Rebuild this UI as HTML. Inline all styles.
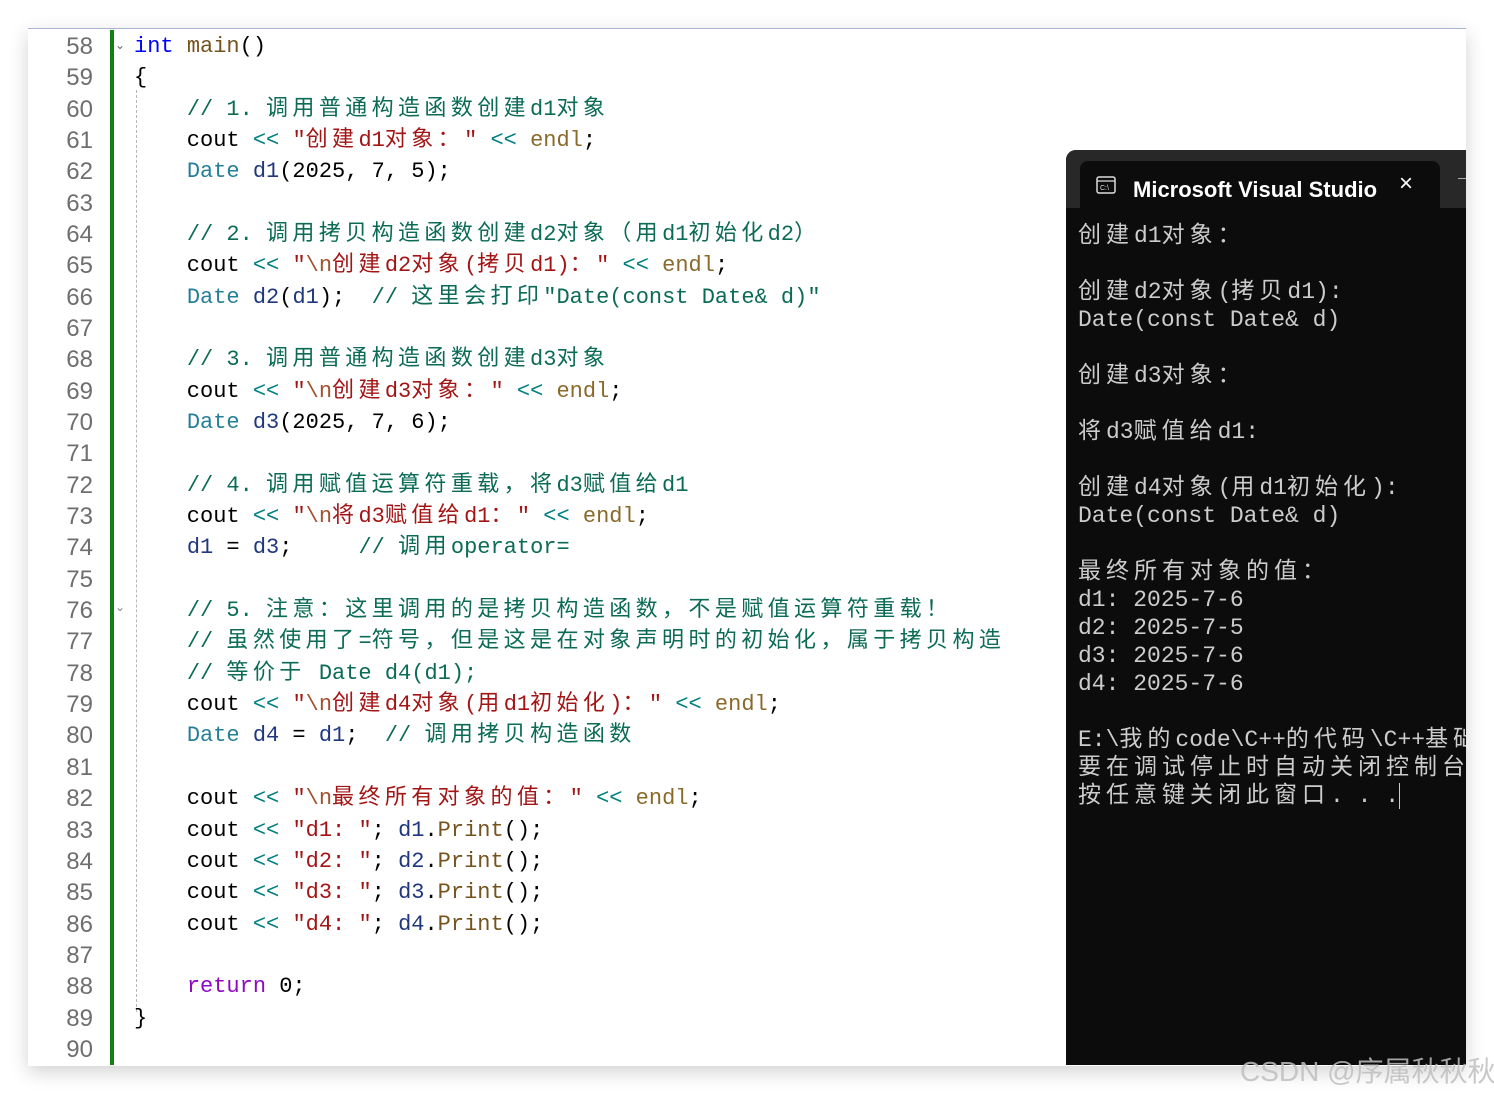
<!DOCTYPE html>
<html><head><meta charset="utf-8">
<style>
body{margin:0;width:1494px;height:1093px;background:#fff;position:relative;overflow:hidden;font-family:"Liberation Mono","Noto Sans CJK SC",monospace;}
#ed{position:absolute;left:28px;top:28px;width:1438px;height:1037px;background:#fff;border-top:1px solid #a9b7d6;box-shadow:0 6px 18px rgba(0,0,0,.18);}
.ln{position:absolute;left:40px;width:53px;text-align:right;color:#6e6e6e;font-family:"Liberation Sans",sans-serif;font-size:24px;line-height:30px;}
.cl{position:absolute;left:134px;white-space:pre;font-size:22px;line-height:30px;color:#000;}
.cl .c{letter-spacing:4.4px}
#bar{position:absolute;left:110px;top:30px;width:4px;height:1035px;background:#108010;}
.g{position:absolute;left:134px;width:0;border-left:1px dashed #b8b8b8;}
.k{color:#0000ff}.f{color:#74531f}.cm{color:#0b6b57}.s{color:#a31515}.t{color:#267f99}.v{color:#1f377f}.r{color:#8f08c4}.e{color:#8a6a2a}.esc{color:#a0522d}.op{color:#008080}
#con{position:absolute;left:1066px;top:150px;width:400px;height:915px;background:#0c0c0c;border-top-left-radius:10px;overflow:hidden;}
#hdr{position:absolute;left:0;top:0;width:428px;height:58px;background:#282828;}
#tab{position:absolute;left:14px;top:11px;width:360px;height:47px;background:#0c0c0c;border-radius:8px 8px 0 0;}
#tt{position:absolute;left:67px;top:22px;color:#fff;font-family:"Liberation Sans",sans-serif;font-size:22px;font-weight:bold;white-space:nowrap;}
.o{position:absolute;left:12px;color:#cccccc;white-space:pre;font-size:23px;line-height:28px;}
.o .c{letter-spacing:5px}
#wm{position:absolute;left:1240px;top:1050px;color:rgba(190,190,190,.85);font-family:"Liberation Sans","Noto Sans CJK SC",sans-serif;font-size:28px;white-space:nowrap;}
</style></head><body>
<div id="ed"></div>
<div id="bar"></div>
<div class="g" style="left:136px;top:90px;height:922px"></div>
<div style="position:absolute;left:115px;top:38px;color:#666;font-size:12px">&#8964;</div>
<div style="position:absolute;left:115px;top:600px;color:#888;font-size:12px">&#8964;</div>
<div id="lines"></div>
<div id="con">
 <div id="hdr"></div>
 <div id="tab"></div>
 <svg style="position:absolute;left:30px;top:26px" width="20" height="18" viewBox="0 0 20 18"><rect x="1" y="1" width="18" height="16" rx="2" fill="none" stroke="#ddd" stroke-width="1.5"/><line x1="1" y1="5" x2="19" y2="5" stroke="#ddd" stroke-width="1.3"/><text x="4" y="14" font-size="7" fill="#ddd" font-family="Liberation Sans">C:\</text></svg>
 <div id="tt">Microsoft Visual Studio 调</div>
 <div style="position:absolute;left:312px;top:12px;width:56px;height:46px;background:#0c0c0c"></div>
 <div style="position:absolute;left:333px;top:20px;color:#fff;font-family:'Liberation Sans';font-size:24px">×</div>
 <div style="position:absolute;left:392px;top:28px;width:8px;height:1px;background:#aaa"></div>
 <div id="out"></div>
</div>
<div id="wm">CSDN @序属秋秋秋</div>
<script>
var code=[
'<span class="k">int</span> <span class="f">main</span>()',
'{',
'    <span class="cm">// 1. 调用普通构造函数创建d1对象</span>',
'    cout <span class="op">&lt;&lt;</span> <span class="s">"创建d1对象："</span> <span class="op">&lt;&lt;</span> <span class="e">endl</span>;',
'    <span class="t">Date</span> <span class="v">d1</span>(2025, 7, 5);',
'',
'    <span class="cm">// 2. 调用拷贝构造函数创建d2对象（用d1初始化d2）</span>',
'    cout <span class="op">&lt;&lt;</span> <span class="s">"<span class="esc">\\n</span>创建d2对象(拷贝d1)："</span> <span class="op">&lt;&lt;</span> <span class="e">endl</span>;',
'    <span class="t">Date</span> <span class="v">d2</span>(<span class="v">d1</span>);  <span class="cm">// 这里会打印"Date(const Date&amp; d)"</span>',
'',
'    <span class="cm">// 3. 调用普通构造函数创建d3对象</span>',
'    cout <span class="op">&lt;&lt;</span> <span class="s">"<span class="esc">\\n</span>创建d3对象："</span> <span class="op">&lt;&lt;</span> <span class="e">endl</span>;',
'    <span class="t">Date</span> <span class="v">d3</span>(2025, 7, 6);',
'',
'    <span class="cm">// 4. 调用赋值运算符重载，将d3赋值给d1</span>',
'    cout <span class="op">&lt;&lt;</span> <span class="s">"<span class="esc">\\n</span>将d3赋值给d1："</span> <span class="op">&lt;&lt;</span> <span class="e">endl</span>;',
'    <span class="v">d1</span> = <span class="v">d3</span>;     <span class="cm">// 调用operator=</span>',
'',
'    <span class="cm">// 5. 注意：这里调用的是拷贝构造函数，不是赋值运算符重载！</span>',
'    <span class="cm">// 虽然使用了=符号，但是这是在对象声明时的初始化，属于拷贝构造</span>',
'    <span class="cm">// 等价于 Date d4(d1);</span>',
'    cout <span class="op">&lt;&lt;</span> <span class="s">"<span class="esc">\\n</span>创建d4对象(用d1初始化)："</span> <span class="op">&lt;&lt;</span> <span class="e">endl</span>;',
'    <span class="t">Date</span> <span class="v">d4</span> = <span class="v">d1</span>;  <span class="cm">// 调用拷贝构造函数</span>',
'',
'    cout <span class="op">&lt;&lt;</span> <span class="s">"<span class="esc">\\n</span>最终所有对象的值："</span> <span class="op">&lt;&lt;</span> <span class="e">endl</span>;',
'    cout <span class="op">&lt;&lt;</span> <span class="s">"d1: "</span>; <span class="v">d1</span>.<span class="f">Print</span>();',
'    cout <span class="op">&lt;&lt;</span> <span class="s">"d2: "</span>; <span class="v">d2</span>.<span class="f">Print</span>();',
'    cout <span class="op">&lt;&lt;</span> <span class="s">"d3: "</span>; <span class="v">d3</span>.<span class="f">Print</span>();',
'    cout <span class="op">&lt;&lt;</span> <span class="s">"d4: "</span>; <span class="v">d4</span>.<span class="f">Print</span>();',
'',
'    <span class="r">return</span> 0;',
'}',
''];
var out=[[235,'创建d1对象：'],[291,'创建d2对象(拷贝d1):'],[319,'Date(const Date&amp; d)'],[375,'创建d3对象：'],[431,'将d3赋值给d1:'],[487,'创建d4对象(用d1初始化):'],[515,'Date(const Date&amp; d)'],[571,'最终所有对象的值：'],[599,'d1: 2025-7-6'],[627,'d2: 2025-7-5'],[655,'d3: 2025-7-6'],[683,'d4: 2025-7-6'],[739,'E:\\我的code\\C++的代码\\C++基础'],[767,'要在调试停止时自动关闭控制台'],[795,'按任意键关闭此窗口. . .<span style="border-left:1px solid #ccc"> </span>']];
function cjk(h){return h.replace(/([\u3000-\u9fff\uff00-\uffef]+)(?![^<]*>)/g,'<span class="c">$1</span>');}
var L=document.getElementById('lines'),h='';
for(var i=0;i<code.length;i++){var y=Math.round(45+31.34*i-13);
h+='<div class="ln" style="top:'+y+'px">'+(58+i)+'</div><div class="cl" style="top:'+y+'px">'+cjk(code[i])+'</div>';}
L.innerHTML=h;
var O=document.getElementById('out');h='';
for(var j=0;j<out.length;j++){h+='<div class="o" style="top:'+(out[j][0]-150-13)+'px">'+cjk(out[j][1])+'</div>';}
O.innerHTML=h;
</script>
</body></html>
